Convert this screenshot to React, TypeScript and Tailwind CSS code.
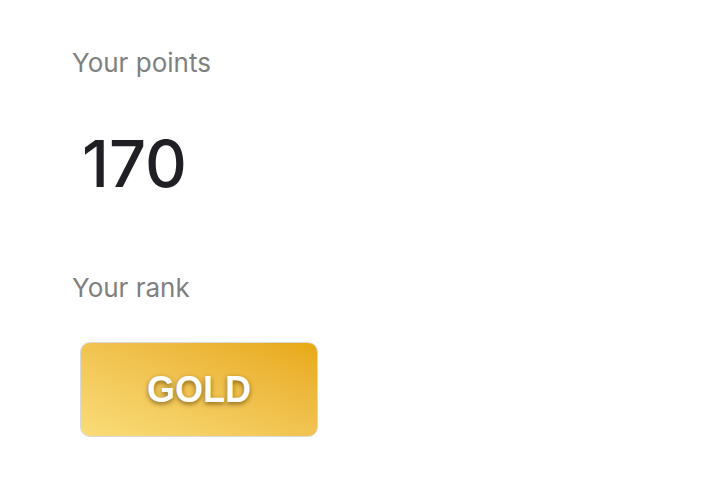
export default function App() {
  return (
    <div className="min-h-screen bg-white px-[72px] pt-[43px] font-['Inter',sans-serif]">
      <p className="text-[26px] leading-[40px] text-[#7f7f7f]">Your points</p>
      <p className="mt-[49px] pl-[10px] text-[65px] leading-[64px] font-medium text-[#1f1f24]">
        170
      </p>
      <p className="mt-[72px] text-[26px] leading-[40px] text-[#7f7f7f]">Your rank</p>
      <div className="mt-[34px] ml-[8px] flex h-[95px] w-[238px] items-center justify-center rounded-[10px] border border-[#d9d9d9] bg-gradient-to-tr from-[#f9dd78] to-[#e8a90f]">
        <span className="font-['Liberation_Sans',sans-serif] text-[36px] font-bold text-white [text-shadow:0_2px_5px_rgba(90,60,0,0.7)]">
          GOLD
        </span>
      </div>
    </div>
  );
}
